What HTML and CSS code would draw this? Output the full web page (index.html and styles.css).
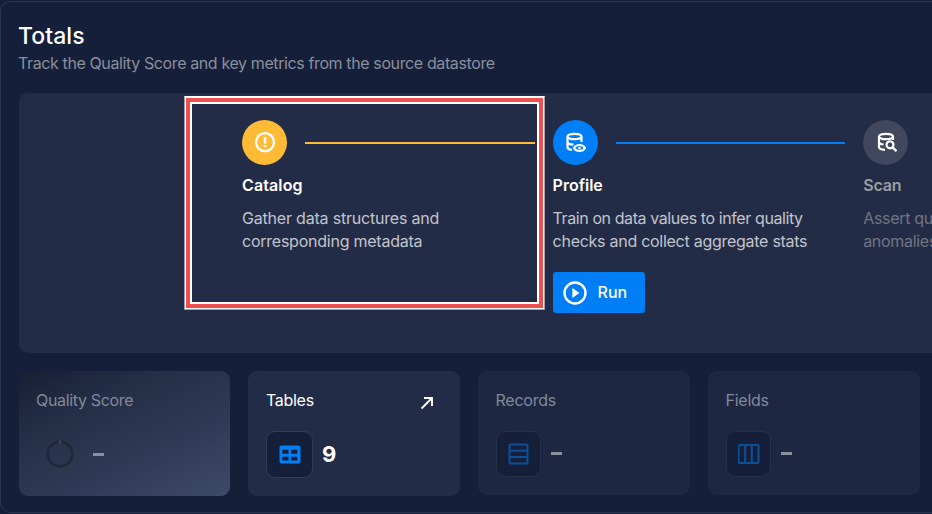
FILE: index.html
```html
<!DOCTYPE html>
<html lang="en">
<head>
<meta charset="utf-8">
<title>Totals</title>
<link rel="stylesheet" href="styles.css">
</head>
<body>
<main class="panel">
  <h1 class="title">Totals</h1>
  <p class="subtitle">Track the Quality Score and key metrics from the source datastore</p>
  <section class="steps">
    <article class="step">
      <div class="track">
        <span class="dot dot-warn"><svg width="22" height="22" viewBox="0 0 22 22" fill="none" stroke="currentColor" stroke-width="2.300"><circle cx="11" cy="10.200" r="9"/><path d="M11 5v6.500M11 13v2.300" stroke-width="2.600"/></svg></span>
        <span class="line line-warn"></span>
      </div>
      <h2 class="name name-catalog">Catalog</h2>
      <p class="desc"><span class="d1">Gather data structures and</span><br><span class="d2">corresponding metadata</span></p>
    </article>
    <article class="step">
      <div class="track">
        <span class="dot dot-active"><svg width="22" height="22" viewBox="0 0 22 22" fill="none" stroke="currentColor" stroke-width="2.200"><ellipse cx="10.500" cy="4.500" rx="7" ry="2.700"/><path d="M3.500 4.500v10.500c0 1.600 2 2.600 4.500 3M17.500 4.500v5.500M3.500 9.700c0 1.600 2.300 2.800 6 2.800"/><path d="M10 16c2.200-4 8.800-4 11 0c-2.200 4-8.800 4-11 0z"/><circle cx="15.500" cy="16" r="1.300" fill="currentColor" stroke="none"/></svg></span>
        <span class="line line-active"></span>
      </div>
      <h2 class="name name-profile">Profile</h2>
      <p class="desc"><span class="d3">Train on data values to infer quality</span><br><span class="d4">checks and collect aggregate stats</span></p>
      <button class="run"><svg width="24" height="24" viewBox="0 0 24 24"><circle cx="12" cy="12" r="10.500" fill="none" stroke="currentColor" stroke-width="2.400"/><path d="M9.400 7v10l7-5z" fill="currentColor"/></svg><span>Run</span></button>
    </article>
    <article class="step step-idle">
      <div class="track">
        <span class="dot dot-idle"><svg width="22" height="22" viewBox="0 0 22 22" fill="none" stroke="currentColor" stroke-width="2.200"><ellipse cx="11" cy="4.500" rx="7" ry="2.700"/><path d="M4 4.500v10.500c0 1.600 2 2.600 6 2.900M18 4.500v3.500M4 9.700c0 1.600 2 2.500 4.500 2.800"/><circle cx="15" cy="12.800" r="3.500"/><path d="M17.500 15.300l4 3.900" stroke-width="2.500"/></svg></span>
      </div>
      <h2 class="name name-scan">Scan</h2>
      <p class="desc">Assert quality checks to identify<br>anomalies and enrich data</p>
    </article>
    <div class="highlight"></div>
  </section>
  <section class="cards">
    <article class="card card-score">
      <h3 class="label label-score">Quality Score</h3>
      <div class="metric">
        <svg class="ring" width="28" height="28" viewBox="0 0 28 28"><circle cx="14" cy="14" r="12.300" fill="none" stroke="#202737" stroke-width="2.500"/><path d="M14 .5v3" stroke="#626c7f"/></svg>
        <span class="dash"></span>
      </div>
    </article>
    <article class="card card-tables">
      <header class="head"><h3 class="label label-tables">Tables</h3><svg class="arrow" width="14" height="14" viewBox="0 0 14 14" fill="none" stroke="currentColor" stroke-width="1.900"><path d="M1.500 12.500L12 2M4 2H12v8"/></svg></header>
      <div class="metric">
        <span class="tile tile-lg"><svg width="22" height="20" viewBox="0 0 22 20"><rect x=".5" y="1.500" width="21" height="18" rx="2" fill="#007ef5"/><path d="M3.300 5.800h6.200v3.900H3.300zM12 5.800h6.200v3.900H12zM3.300 12.700h6.200v3.900H3.300zM12 12.700h6.200v3.900H12z" fill="#151f3a"/></svg></span>
        <strong class="value">9</strong>
      </div>
    </article>
    <article class="card card-muted">
      <h3 class="label label-records">Records</h3>
      <div class="metric">
        <span class="tile"><svg width="22" height="22" viewBox="0 0 22 22" fill="none" stroke="#0c5098" stroke-width="2"><rect x="1.500" y="1.500" width="18" height="19" rx="1.500"/><path d="M1.500 7.700h18M1.500 14h18"/></svg></span>
        <span class="dash"></span>
      </div>
    </article>
    <article class="card card-muted">
      <h3 class="label label-fields">Fields</h3>
      <div class="metric">
        <span class="tile"><svg width="22" height="22" viewBox="0 0 22 22" fill="none" stroke="#0c5098" stroke-width="2"><rect x="0.500" y="2" width="20" height="18" rx="1.500"/><path d="M7.200 2v18M13.800 2v18"/></svg></span>
        <span class="dash"></span>
      </div>
    </article>
  </section>
</main>
</body>
</html>
```

FILE: styles.css
```css
* { box-sizing: border-box; }
html, body { margin: 0; height: 100%; overflow: hidden; background: #151e38; }
body { font-family: Inter, sans-serif; font-size: 16px; color: #fff; }
h1, h2, h3, p { margin: 0; white-space: nowrap; }
svg { display: block; flex: none; }

.panel {
  width: 960px;
  height: 512px;
  margin-top: 1px;
  padding: 19px 0 0 18px;
  border: 1px solid #2c3650;
  border-radius: 10px;
  background: #151f3a;
}
.title { margin-left: -1px; font-size: 23px; line-height: 30px; font-weight: 500; letter-spacing: .05px; }
.subtitle { height: 42px; margin-left: -1px; line-height: 24px; color: #8a8f9c; letter-spacing: -.385px; }

.steps {
  position: relative;
  display: flex;
  width: 941px;
  height: 260px;
  padding: 27px 0 0 223px;
  border-radius: 9px;
  background: #232c47;
  overflow: hidden;
}
.step { flex: none; width: 310.600px; }
.track { display: flex; align-items: center; gap: 18px; height: 45px; padding-right: 18px; }
.dot { display: flex; align-items: center; justify-content: center; flex: none; width: 45px; height: 45px; border-radius: 50%; }
.dot-warn { background: #ffba36; }
.dot-active { background: #007ef5; }
.dot-idle { background: #40475f; }
.line { flex: 1; height: 2px; }
.line-warn { background: #ffba36; }
.line-active { background: #007ef5; }
.name { margin-top: 9px; font-size: 16px; line-height: 23px; font-weight: 600; }
.name-catalog { letter-spacing: .12px; }
.name-scan { letter-spacing: -.2px; }
.desc { margin-top: 10px; line-height: 23px; color: #c2c4cb; }
.d1 { letter-spacing: -.2px; }
.d2 { letter-spacing: -.24px; }
.d3 { letter-spacing: -.41px; }
.d4 { letter-spacing: -.27px; }
.step-idle .name { color: #9c9ca1; }
.step-idle .desc { color: #6f7482; letter-spacing: -.3px; }

.run {
  display: flex;
  align-items: center;
  gap: 11px;
  width: 92px;
  height: 41px;
  margin-top: 19px;
  padding: 0 10px;
  border: 0;
  border-radius: 3px;
  background: #007ef5;
  color: #fff;
  font: 500 16px Inter, sans-serif;
}
.run span { padding-bottom: 2px; }

/* Selection frame drawn over the catalog step */
.highlight {
  position: absolute;
  left: 165px;
  top: 3px;
  width: 361px;
  height: 214px;
  border: 1px solid #9da2ae;
  border-top-color: #fff;
}
.highlight::before { content: ""; position: absolute; inset: 0; border: 1px solid #fff; }
.highlight::after { content: ""; position: absolute; inset: 1px; border: 4px solid #ee4f4f; box-shadow: inset 0 0 0 2px #fff; }

.cards { display: flex; align-items: flex-start; gap: 18px; margin-top: 18px; }
.card { flex: none; width: 212px; height: 124px; padding: 18px; border-radius: 9px; }
.card-score { width: 211px; height: 125px; padding-left: 17px; background: linear-gradient(155deg, #161f33 0%, #242e47 30%, #2d3953 60%, #3d4a68 100%); }
.card-tables { height: 125px; background: #232c47; }
.card-muted { background: #1d2742; }
.label { font-size: 16px; line-height: 23px; font-weight: 400; color: #82889a; }
.label-score { letter-spacing: -.34px; }
.label-tables { color: #fff; letter-spacing: -.3px; }
.label-records, .label-fields { margin-left: -.5px; letter-spacing: -.25px; }
.head { display: flex; justify-content: space-between; }
.arrow { margin: 7px 8px 0 0; }
.metric { display: flex; align-items: center; height: 46px; margin-top: 19px; }
.card-muted .metric { height: 45px; }
.ring { margin: 0 19px 0 10px; }
.dash { width: 11px; height: 3px; background: #8b90a0; }
.tile { display: flex; align-items: center; justify-content: center; width: 45px; height: 46px; margin-right: 10px; border: 1px solid #253049; border-radius: 9px; background: #151f3a; }
.tile-lg { width: 47px; height: 47px; margin-right: 9px; border-color: #333c55; }
.value { font-size: 22px; line-height: 30px; font-weight: 700; }
```
